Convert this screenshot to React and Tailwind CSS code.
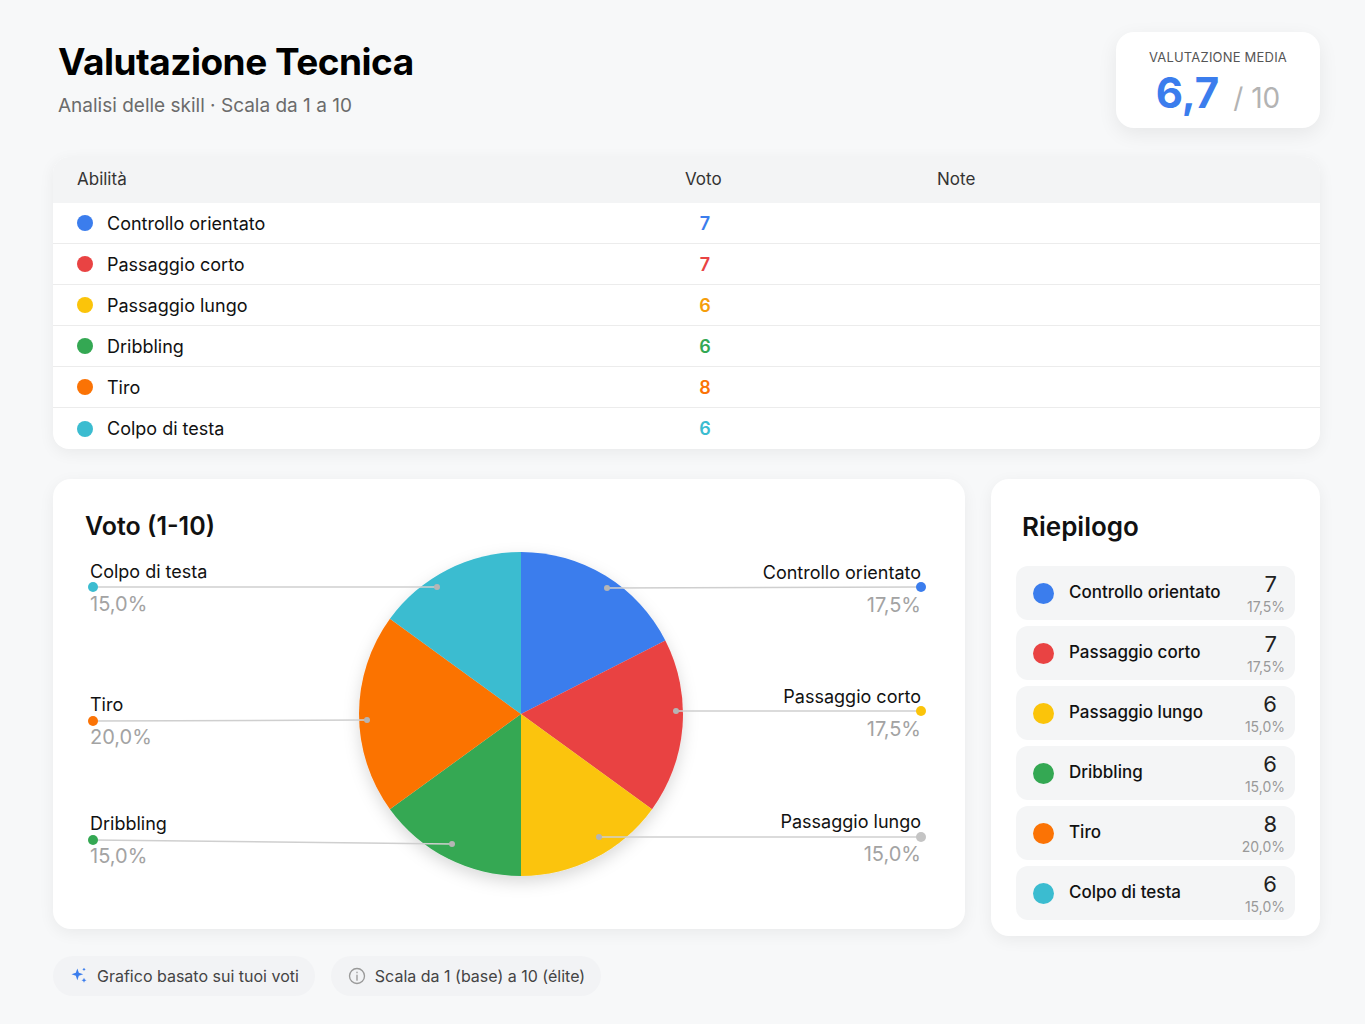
import React from 'react'

const skills = [
    { name: 'Controllo orientato', voto: 7, pct: '17,5%', color: '#3b7ded', text: 'text-[#3b7ded]' },
    { name: 'Passaggio corto', voto: 7, pct: '17,5%', color: '#e94343', text: 'text-[#e94343]' },
    { name: 'Passaggio lungo', voto: 6, pct: '15,0%', color: '#fbc40a', text: 'text-[#f59e0b]' },
    { name: 'Dribbling', voto: 6, pct: '15,0%', color: '#34a853', text: 'text-[#34a853]' },
    { name: 'Tiro', voto: 8, pct: '20,0%', color: '#fb7305', text: 'text-[#fb7305]' },
    { name: 'Colpo di testa', voto: 6, pct: '15,0%', color: '#3bbcd0', text: 'text-[#3bbcd0]' },
]

const CX = 468, CY = 235, R = 162

function slicePath(a0, a1) {
    const p = a => [CX + R * Math.sin(a * Math.PI / 180), CY - R * Math.cos(a * Math.PI / 180)]
    const [x0, y0] = p(a0)
    const [x1, y1] = p(a1)
    return `M${CX},${CY} L${x0},${y0} A${R},${R} 0 ${a1 - a0 > 180 ? 1 : 0} 1 ${x1},${y1} Z`
}

// label lines: [dotX, dotY, endX, endY, dotColor]
const lines = [
    [40, 108, 384, 108, '#3bbcd0'],
    [868, 108, 554, 109, '#3b7ded'],
    [868, 232, 623, 232, '#fbc40a'],
    [868, 358, 546, 358, '#c4c4c4'],
    [40, 242, 314, 241, '#fb7305'],
    [40, 361, 399, 365, '#34a853'],
]

function Label({ name, pct, right, top }) {
    return (
        <div className={`absolute ${right ? 'right-[44px] text-right' : 'left-[37px]'}`} style={{ top }}>
            <div className="text-[18px] text-[#111] leading-[22px]">{name}</div>
            <div className="text-[20px] text-[#a3a3a3] leading-[24px] mt-[9px]">{pct}</div>
        </div>
    )
}

function App() {
    let angle = 0
    const slices = skills.map(s => {
        const sweep = s.voto / 40 * 360
        const d = slicePath(angle, angle + sweep)
        angle += sweep
        return <path key={s.name} d={d} fill={s.color} />
    })

    return (
        <div className="min-h-[1024px] bg-[#f7f8f9] font-[Inter,sans-serif] px-[45px] pl-[53px] pt-[32px]">
            <div className="flex justify-between items-start">
                <div className="pt-[8px] pl-[5px]">
                    <h1 className="text-[37px] font-bold text-black tracking-[-0.5px] leading-[44px]">Valutazione Tecnica</h1>
                    <p className="text-[19px] text-[#6b6b6b] mt-[8px]">Analisi delle skill · Scala da 1 a 10</p>
                </div>
                <div className="bg-white rounded-[18px] shadow-[0_6px_20px_rgba(0,0,0,0.07)] w-[204px] h-[96px] flex flex-col items-center pt-[16px]">
                    <div className="text-[13px] text-[#555] tracking-[0.2px]">VALUTAZIONE MEDIA</div>
                    <div className="flex items-baseline gap-[14px] mt-[1px]">
                        <span className="text-[42px] font-bold text-[#3b7ded] leading-[48px]">6,7</span>
                        <span className="text-[28px] text-[#b3b3b3]">/ 10</span>
                    </div>
                </div>
            </div>

            <div className="mt-[29px] bg-white rounded-[16px] shadow-[0_4px_16px_rgba(0,0,0,0.06)] overflow-hidden">
                <div className="flex items-center h-[46px] bg-[#f3f4f5] text-[17px] text-[#333]">
                    <div className="w-[632px] pl-[24px]">Abilità</div>
                    <div className="w-[252px]">Voto</div>
                    <div>Note</div>
                </div>
                {skills.map((s, i) => (
                    <div key={s.name} className={`flex items-center h-[41px] ${i < skills.length - 1 ? 'border-b border-[#ececec]' : 'h-[38px]'}`}>
                        <div className="w-[632px] pl-[24px] flex items-center gap-[14px]">
                            <span className="w-[16px] h-[16px] rounded-full" style={{ background: s.color }}></span>
                            <span className="text-[18px] text-[#111]">{s.name}</span>
                        </div>
                        <div className={`w-[40px] text-center text-[18px] font-semibold ${s.text}`}>{s.voto}</div>
                    </div>
                ))}
            </div>

            <div className="mt-[30px] flex gap-[26px] items-start">
                <div className="relative w-[912px] h-[450px] shrink-0 bg-white rounded-[18px] shadow-[0_4px_16px_rgba(0,0,0,0.06)]">
                    <h2 className="absolute left-[32px] top-[29px] text-[25px] font-semibold text-[#111]">Voto (1-10)</h2>
                    <svg className="absolute left-0 top-0" width="912" height="450">
                        <defs>
                            <filter id="sh" x="-20%" y="-20%" width="140%" height="140%">
                                <feDropShadow dx="0" dy="6" stdDeviation="8" floodOpacity="0.15" />
                            </filter>
                        </defs>
                        <g filter="url(#sh)">{slices}</g>
                        {lines.map(([x0, y0, x1, y1, c], i) => (
                            <g key={i}>
                                <line x1={x0} y1={y0} x2={x1} y2={y1} stroke="#cfcfcf" strokeWidth="1.5" />
                                <circle cx={x1} cy={y1} r="3" fill="#b5b5b5" />
                                <circle cx={x0} cy={y0} r="5" fill={c} />
                            </g>
                        ))}
                    </svg>
                    <Label name="Colpo di testa" pct="15,0%" top={82} />
                    <Label name="Tiro" pct="20,0%" top={215} />
                    <Label name="Dribbling" pct="15,0%" top={334} />
                    <Label name="Controllo orientato" pct="17,5%" right top={83} />
                    <Label name="Passaggio corto" pct="17,5%" right top={207} />
                    <Label name="Passaggio lungo" pct="15,0%" right top={332} />
                </div>

                <div className="flex-1 bg-white rounded-[18px] shadow-[0_4px_16px_rgba(0,0,0,0.06)] px-[25px] pt-[28px] pb-[16px]">
                    <h2 className="text-[26px] font-semibold text-[#111] pl-[6px]">Riepilogo</h2>
                    <div className="mt-[20px] flex flex-col gap-[6px]">
                        {skills.map(s => (
                            <div key={s.name} className="bg-[#f4f5f6] rounded-[12px] h-[54px] flex items-center pl-[17px] pr-[10px]">
                                <span className="w-[21px] h-[21px] rounded-full shrink-0" style={{ background: s.color }}></span>
                                <span className="ml-[15px] text-[17px] font-medium text-[#111] flex-1 whitespace-nowrap">{s.name}</span>
                                <div className="flex flex-col items-end leading-none">
                                    <span className="text-[22px] text-[#222] pr-[8px]">{s.voto}</span>
                                    <span className="text-[14px] text-[#999] mt-[5px]">{s.pct}</span>
                                </div>
                            </div>
                        ))}
                    </div>
                </div>
            </div>

            <div className="mt-[20px] flex gap-[16px]">
                <div className="flex items-center gap-[8px] h-[40px] px-[16px] bg-[#f2f3f5] rounded-full text-[16px] text-[#444]">
                    <svg width="20" height="20" viewBox="0 0 24 24" fill="#3b7ded">
                        <path d="M10 3l1.8 5.2L17 10l-5.2 1.8L10 17l-1.8-5.2L3 10l5.2-1.8z" />
                        <path d="M18 14l.9 2.1L21 17l-2.1.9L18 20l-.9-2.1L15 17l2.1-.9z" />
                        <path d="M18 2l.7 1.3L20 4l-1.3.7L18 6l-.7-1.3L16 4l1.3-.7z" />
                    </svg>
                    Grafico basato sui tuoi voti
                </div>
                <div className="flex items-center gap-[8px] h-[40px] px-[16px] bg-[#f2f3f5] rounded-full text-[16px] text-[#444]">
                    <svg width="20" height="20" viewBox="0 0 24 24" fill="none" stroke="#999" strokeWidth="1.6">
                        <circle cx="12" cy="12" r="9" />
                        <path d="M12 11v6M12 7.5v.5" strokeLinecap="round" />
                    </svg>
                    Scala da 1 (base) a 10 (élite)
                </div>
            </div>
        </div>
    )
}

export default App
